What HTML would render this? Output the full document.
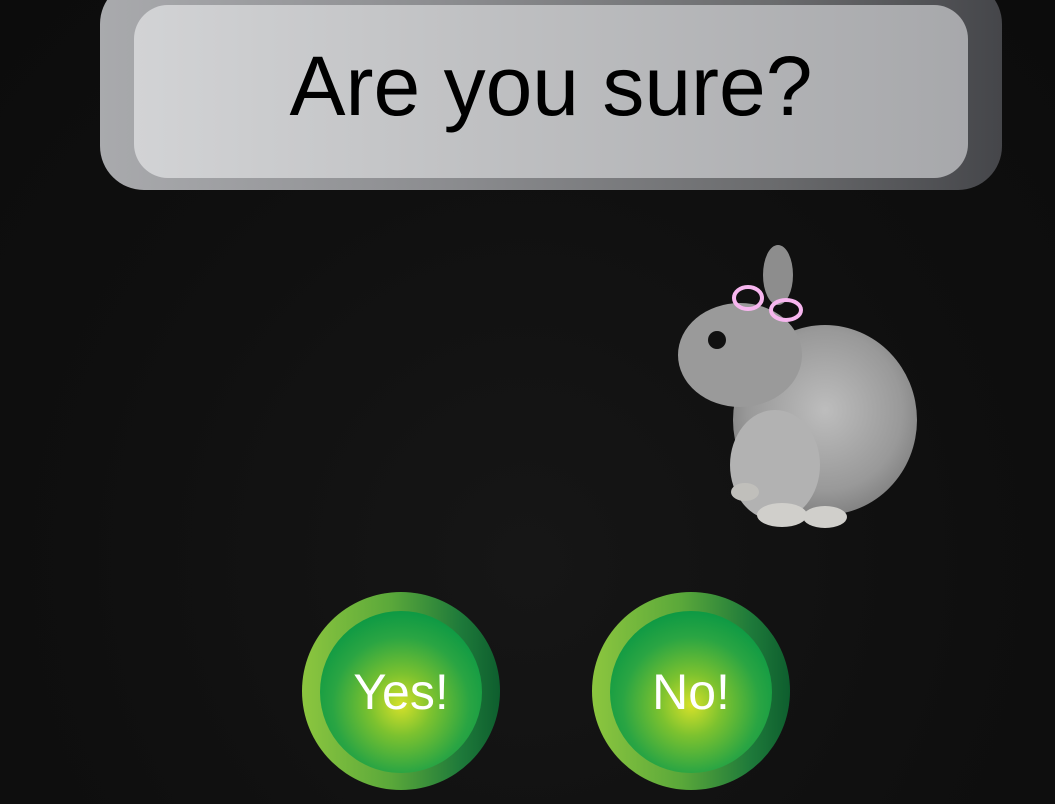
<!DOCTYPE html>
<html><head><style>
html,body{margin:0;padding:0}
body{width:1055px;height:804px;overflow:hidden;background:radial-gradient(ellipse at 50% 70%,#161616 0%,#0f0f0f 60%,#0c0c0c 100%);position:relative;font-family:"Liberation Sans",sans-serif}
.outer{position:absolute;left:100px;top:-20px;width:902px;height:210px;border-radius:44px;background:linear-gradient(90deg,#a9aaad 0%,#8a8b8e 40%,#6a6b6d 75%,#45464a 100%)}
.inner{position:absolute;left:134px;top:5px;width:834px;height:173px;border-radius:34px;background:linear-gradient(90deg,#d2d3d5 0%,#c0c1c3 40%,#a7a8ab 100%);text-align:center}
.inner span{display:block;margin-top:36px;font-size:84px;line-height:90px;color:#000;letter-spacing:0px}
.btn{position:absolute;width:198px;height:198px;border-radius:50%;background:linear-gradient(90deg,#8cc63f 0%,#5aa83a 45%,#1e7a3a 80%,#0e5e2e 100%)}
.btn .c{position:absolute;left:18px;top:19px;width:162px;height:162px;border-radius:50%;background:radial-gradient(circle at 50% 58%,#d6e12a 0%,#7cc22f 25%,#2aa543 55%,#009444 85%);color:#fff;text-align:center;line-height:162px;font-size:50px}
</style></head><body>
<div class="outer"></div>
<div class="inner"><span>Are you sure?</span></div>
<svg style="position:absolute;left:660px;top:240px" width="270" height="300" viewBox="660 240 270 300">
<defs><radialGradient id="g" cx="0.5" cy="0.45" r="0.6"><stop offset="0" stop-color="#bdbdbd"/><stop offset="0.7" stop-color="#999"/><stop offset="1" stop-color="#7a7a7a"/></radialGradient></defs>
<ellipse cx="778" cy="275" rx="15" ry="30" fill="#8d8d8d"/>
<ellipse cx="825" cy="420" rx="92" ry="95" fill="url(#g)"/>
<ellipse cx="740" cy="355" rx="62" ry="52" fill="#9a9a9a"/>
<ellipse cx="775" cy="465" rx="45" ry="55" fill="#b2b2b2"/>
<ellipse cx="782" cy="515" rx="25" ry="12" fill="#d0cfcb"/>
<ellipse cx="825" cy="517" rx="22" ry="11" fill="#d0cfcb"/>
<ellipse cx="745" cy="492" rx="14" ry="9" fill="#c0bfbb"/>
<circle cx="717" cy="340" r="9" fill="#111"/>
<g fill="none" stroke="#f7b6ef" stroke-width="4"><ellipse cx="748" cy="298" rx="14" ry="11"/><ellipse cx="786" cy="310" rx="15" ry="10"/></g>
</svg>
<div class="btn" style="left:302px;top:592px"><div class="c">Yes!</div></div>
<div class="btn" style="left:592px;top:592px"><div class="c">No!</div></div>
</body></html>
